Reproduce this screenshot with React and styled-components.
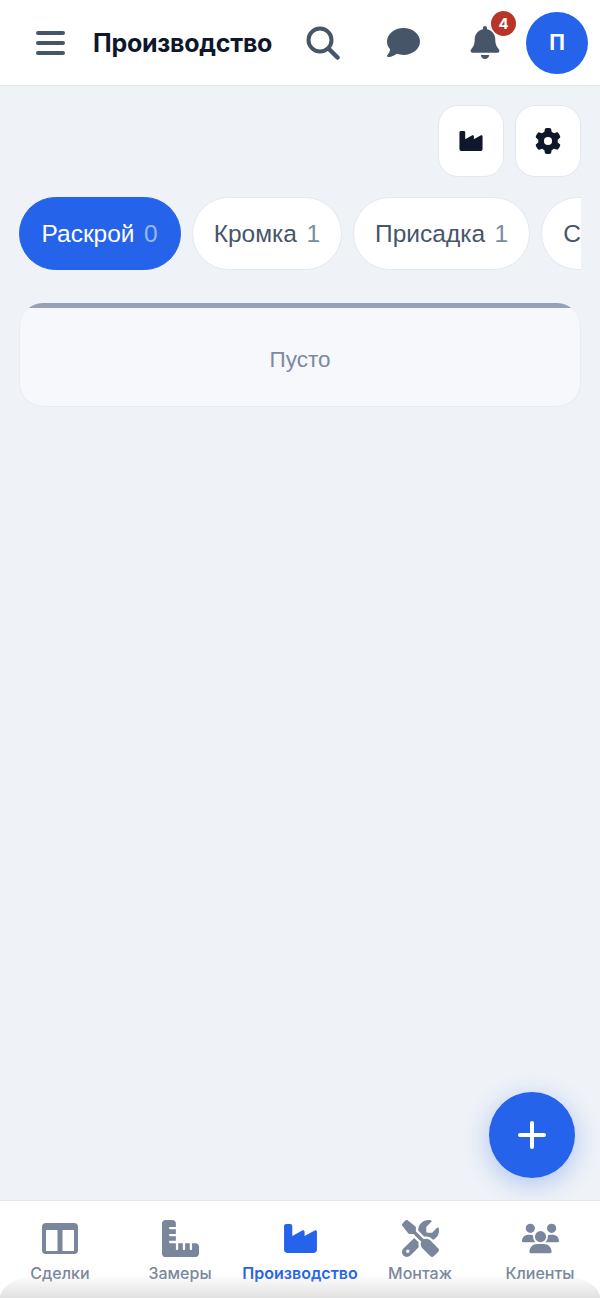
import React from "react";
import styled, { createGlobalStyle } from "styled-components";
import { FaComment, FaBell, FaIndustry, FaGear, FaRulerCombined, FaScrewdriverWrench, FaUsers } from "react-icons/fa6";

const Global = createGlobalStyle`
  html, body { margin: 0; padding: 0; height: 100%; background: #eff2f7; }
  #root { height: 100%; }
  * { box-sizing: border-box; }
`;

const Page = styled.div`
  position: relative;
  width: 600px;
  height: 1298px;
  display: flex;
  flex-direction: column;
  overflow: hidden;
  background: #eff2f7;
  font-family: "Liberation Sans", Arial, sans-serif;
`;

const Header = styled.header`
  height: 86px;
  flex: none;
  display: flex;
  align-items: center;
  padding: 0 12px 0 35px;
  background: #fff;
  border-bottom: 1px solid #e2e8f0;
  color: #475569;
`;

const Title = styled.h1`
  margin: 0 0 0 28px;
  flex: 1;
  font-family: Inter, sans-serif;
  font-size: 25px;
  font-weight: 700;
  letter-spacing: -0.25px;
  color: #0f172a;
`;

const HeaderIcon = styled.span`
  position: relative;
  display: flex;
  align-items: center;
  justify-content: center;
  width: ${(p) => p.$w}px;
  margin-right: ${(p) => p.$mr}px;
  font-size: ${(p) => p.$size}px;
`;

const Badge = styled.span`
  position: absolute;
  top: -15px;
  right: -16px;
  width: 25px;
  height: 25px;
  border-radius: 50%;
  background: #b93329;
  color: #fff;
  font-family: Inter, sans-serif;
  font-size: 15px;
  font-weight: 700;
  display: flex;
  align-items: center;
  justify-content: center;
`;

const Avatar = styled.div`
  width: 62px;
  height: 62px;
  border-radius: 50%;
  background: #2563eb;
  color: #fff;
  font-family: Inter, sans-serif;
  font-size: 21px;
  font-weight: 700;
  display: flex;
  align-items: center;
  justify-content: center;
`;

const Main = styled.main`
  flex: 1;
  min-height: 0;
  padding: 19px 19px 0;
`;

const Actions = styled.div`
  display: flex;
  justify-content: flex-end;
  gap: 11px;
`;

const ActionButton = styled.button`
  width: 66px;
  height: 72px;
  padding: 0;
  border: 1px solid #e2e8f0;
  border-radius: 20px;
  background: #fff;
  color: #0f172a;
  font-size: 26px;
  display: flex;
  align-items: center;
  justify-content: center;
`;

const Tabs = styled.div`
  display: flex;
  gap: 11px;
  margin: 20px 0 0 -0.500px;
  overflow: hidden;
`;

const Tab = styled.div`
  flex: none;
  height: 73px;
  padding: 0 ${(p) => (p.$active ? 22 : 21)}px;
  border-radius: 37px;
  border: 1px solid ${(p) => (p.$active ? "#2563eb" : "#e2e8f0")};
  background: ${(p) => (p.$active ? "#2563eb" : "#fff")};
  color: ${(p) => (p.$active ? "#fff" : "#475569")};
  font-size: 24.500px;
  display: flex;
  align-items: center;
  gap: 9.500px;
`;

const Count = styled.span`
  color: ${(p) => (p.$active ? "rgba(255,255,255,0.55)" : "#7c8aa0")};
`;

const EmptyCard = styled.section`
  margin-top: 33px;
  height: 104px;
  display: flex;
  flex-direction: column;
  overflow: hidden;
  border: 1px solid #e8edf4;
  border-top: 0;
  border-radius: 24px;
  background: #f6f8fc;
`;

const CardBar = styled.div`
  flex: none;
  height: 5px;
  margin: 0 -1px;
  background: #94a3b8;
`;

const CardBody = styled.div`
  flex: 1;
  padding-top: 6px;
  color: #7c8aa0;
  font-size: 22.500px;
  display: flex;
  align-items: center;
  justify-content: center;
`;

const Fab = styled.button`
  position: absolute;
  left: 489px;
  top: 1092px;
  width: 86px;
  height: 86px;
  padding: 0;
  border: 0;
  border-radius: 50%;
  background: #2563eb;
  color: #fff;
  display: flex;
  align-items: center;
  justify-content: center;
  box-shadow: 0 6px 26px rgba(37, 99, 235, 0.32);
`;

const Nav = styled.nav`
  position: relative;
  flex: none;
  height: 98px;
  display: grid;
  grid-template-columns: repeat(5, 120px);
  background: #fff;
  border-top: 1px solid #e2e8f0;
`;

const NavItem = styled.div`
  display: flex;
  flex-direction: column;
  align-items: center;
  padding-top: 19px;
  color: ${(p) => (p.$active ? "#2563eb" : "#7a869c")};
  font-family: Inter, sans-serif;
  font-size: 16px;
  font-weight: ${(p) => (p.$active ? 600 : 500)};
  white-space: nowrap;
`;

const NavIconBox = styled.div`
  height: 37px;
  display: flex;
  align-items: center;
  justify-content: center;
  font-size: ${(p) => p.$size || 37}px;
  margin-bottom: 6px;
`;

const HomeShade = styled.div`
  position: absolute;
  left: 0;
  right: 0;
  bottom: 0;
  height: 24px;
  border-radius: 60px 60px 0 0 / 30px 30px 0 0;
  background: linear-gradient(to bottom, rgba(255,255,255,0), rgba(190,190,190,0.45));
  pointer-events: none;
`;

const MenuIcon = () => (
  <svg width="30" height="26" viewBox="0 0 30 26" fill="none" stroke="currentColor" strokeWidth="4" strokeLinecap="round" aria-hidden="true">
    <path d="M3 3h25M3 13h25M3 23h25" />
  </svg>
);

const SearchIcon = () => (
  <svg width="34" height="34" viewBox="0 0 34 34" fill="none" stroke="currentColor" aria-hidden="true">
    <circle cx="14" cy="14" r="11.500" strokeWidth="4" />
    <path d="M23 23l8.500 8.500" strokeWidth="4.500" strokeLinecap="round" />
  </svg>
);

const PlusIcon = () => (
  <svg width="28" height="28" viewBox="0 0 28 28" fill="none" stroke="currentColor" strokeWidth="4" strokeLinecap="round" aria-hidden="true">
    <path d="M14 2v24M2 14h24" />
  </svg>
);

const ColumnsIcon = () => (
  <svg width="36" height="31" viewBox="0 0 36 31" aria-hidden="true">
    <path fill="currentColor" fillRule="evenodd" d="M4 0h28a4 4 0 0 1 4 4v23a4 4 0 0 1-4 4H4a4 4 0 0 1-4-4V4a4 4 0 0 1 4-4zM4 7v21h11.500V7zm16.500 0v21H32V7z" />
  </svg>
);

const tabs = [
  { name: "Раскрой", count: 0, active: true },
  { name: "Кромка", count: 1 },
  { name: "Присадка", count: 1 },
  { name: "Сборка", count: 0 },
];

export default function App() {
  return (
    <Page>
      <Global />
      <Header>
        <MenuIcon />
        <Title>Производство</Title>
        <HeaderIcon $w={34} $mr={46} $size={33}><SearchIcon /></HeaderIcon>
        <HeaderIcon $w={34} $mr={50} $size={33}><FaComment /></HeaderIcon>
        <HeaderIcon $w={30} $mr={26} $size={33}><FaBell /><Badge>4</Badge></HeaderIcon>
        <Avatar>П</Avatar>
      </Header>
      <Main>
        <Actions>
          <ActionButton><FaIndustry /></ActionButton>
          <ActionButton><FaGear /></ActionButton>
        </Actions>
        <Tabs>
          {tabs.map((t) => (
            <Tab key={t.name} $active={t.active}>
              {t.name}
              <Count $active={t.active}>{t.count}</Count>
            </Tab>
          ))}
        </Tabs>
        <EmptyCard>
          <CardBar />
          <CardBody>Пусто</CardBody>
        </EmptyCard>
      </Main>
      <Fab><PlusIcon /></Fab>
      <Nav>
        <NavItem><NavIconBox><ColumnsIcon /></NavIconBox>Сделки</NavItem>
        <NavItem><NavIconBox><FaRulerCombined /></NavIconBox>Замеры</NavItem>
        <NavItem $active><NavIconBox><FaIndustry /></NavIconBox>Производство</NavItem>
        <NavItem><NavIconBox><FaScrewdriverWrench /></NavIconBox>Монтаж</NavItem>
        <NavItem><NavIconBox><FaUsers /></NavIconBox>Клиенты</NavItem>
        <HomeShade />
      </Nav>
    </Page>
  );
}
